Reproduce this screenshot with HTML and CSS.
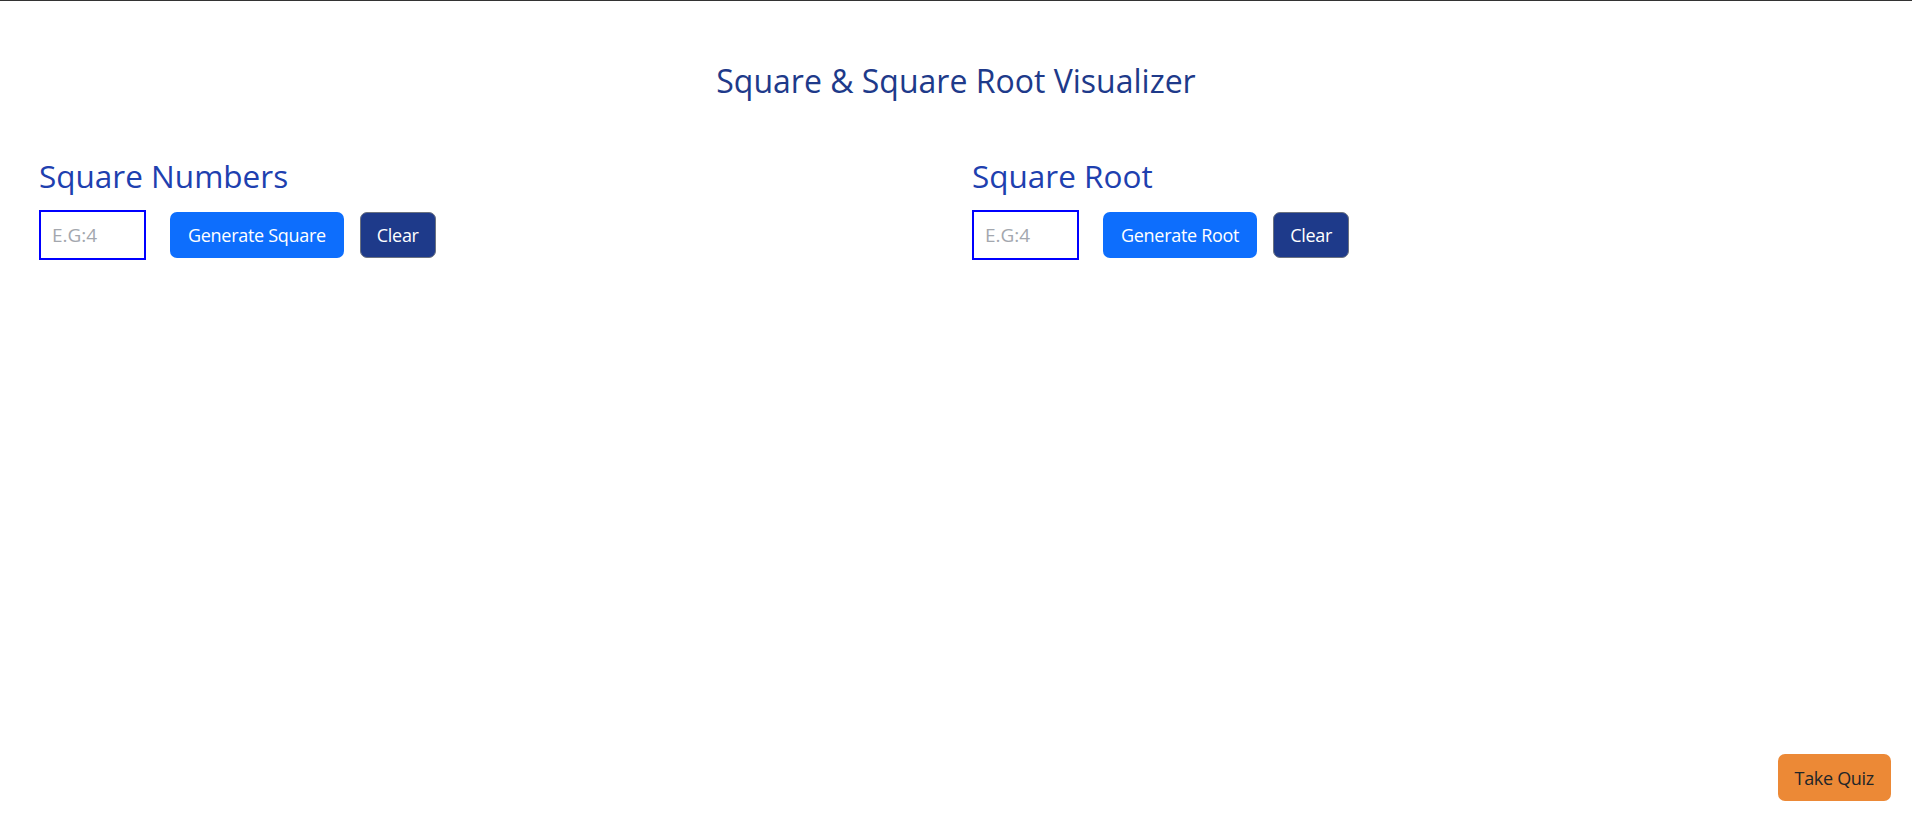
FILE: index.html
```html
<!DOCTYPE html>
<html lang="en">
<head>
<meta charset="utf-8">
<title>Square &amp; Square Root Visualizer</title>
<link rel="stylesheet" href="styles.css">
</head>
<body>
<h1 class="title">Square &amp; Square Root Visualizer</h1>
<main class="panels">
  <section class="panel">
    <h2 class="panel-title">Square Numbers</h2>
    <div class="controls">
      <input class="num-input" type="number" placeholder="E.G:4">
      <button class="btn btn-primary">Generate Square</button>
      <button class="btn btn-dark">Clear</button>
    </div>
  </section>
  <section class="panel">
    <h2 class="panel-title">Square Root</h2>
    <div class="controls">
      <input class="num-input" type="number" placeholder="E.G:4">
      <button class="btn btn-primary">Generate Root</button>
      <button class="btn btn-dark">Clear</button>
    </div>
  </section>
</main>
<button class="btn btn-quiz">Take Quiz</button>
</body>
</html>
```
FILE: styles.css
```css
html, body {
  margin: 0;
  padding: 0;
  background: #ffffff;
}
body {
  border-top: 1px solid #333333;
  font-family: "Open Sans", "Noto Sans", sans-serif;
  min-height: 825px;
}
.title {
  margin: 0;
  padding-top: 60px;
  font-size: 32px;
  line-height: 40px;
  font-weight: 400;
  color: #1e3a8a;
  text-align: center;
}
.panels {
  display: grid;
  grid-template-columns: 1fr 1fr;
  column-gap: 32px;
  padding: 0 39px;
  margin-top: 55px;
}
.panel-title {
  margin: 0 0 14px;
  font-size: 31.5px;
  line-height: 40px;
  font-weight: 400;
  color: #1e40af;
}
.controls {
  display: flex;
  align-items: center;
  height: 50px;
}
.num-input {
  box-sizing: border-box;
  width: 107px;
  height: 50px;
  border: 2px solid #0000ff;
  border-radius: 0;
  padding: 0 11px;
  margin: 0 24px 0 0;
  font-family: inherit;
  font-size: 19px;
  color: #212529;
  outline: none;
  -moz-appearance: textfield;
}
.num-input::placeholder {
  color: #a3a7ae;
}
.num-input::-webkit-outer-spin-button,
.num-input::-webkit-inner-spin-button {
  -webkit-appearance: none;
  margin: 0;
}
.btn {
  box-sizing: border-box;
  height: 46px;
  border-radius: 7px;
  font-family: inherit;
  font-size: 18px;
  letter-spacing: -0.3px;
  line-height: 1;
  cursor: pointer;
}
.btn-primary {
  background: #0d6efd;
  color: #ffffff;
  border: none;
  padding: 0 18px;
  margin-right: 16px;
}
.btn-dark {
  background: #1e3a8a;
  color: #ffffff;
  border: 1px solid #6b7280;
  padding: 0 16px;
}
.btn-quiz {
  position: fixed;
  right: 21px;
  bottom: 25px;
  height: 47px;
  padding: 0 17px;
  background: #ec8936;
  color: #212529;
  border: none;
}
```
